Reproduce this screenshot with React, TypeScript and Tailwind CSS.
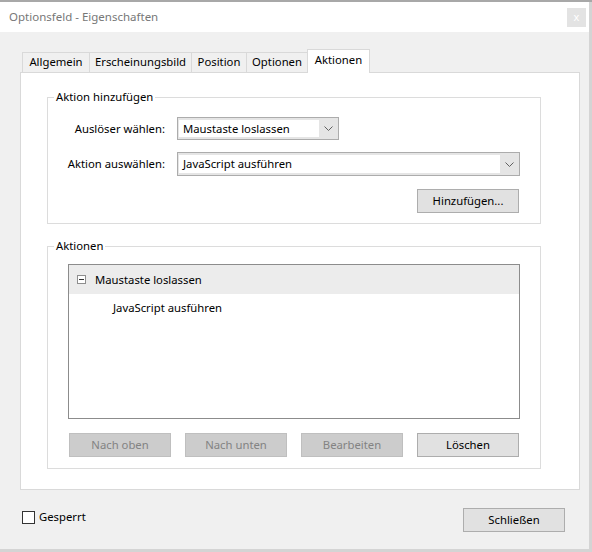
import React from "react";

function Chevron() {
  return (
    <svg width="9" height="5" viewBox="0 0 9 5" fill="none">
      <polyline points="0.5,0.5 4.5,4.5 8.5,0.5" stroke="#606060" strokeWidth="1" />
    </svg>
  );
}

function Select({ value, width, height }: { value: string; width: string; height: string }) {
  return (
    <div className={`${width} ${height} flex border border-[#acacac] bg-[#e5e5e5] py-[2px] pl-[1px]`}>
      <div className="flex-1 bg-white flex items-center pl-[4px] text-black">{value}</div>
      <div className="w-[19px] flex items-center justify-center">
        <Chevron />
      </div>
    </div>
  );
}

function Btn({ label, disabled }: { label: string; disabled?: boolean }) {
  return disabled ? (
    <div className="w-[102px] h-[24px] flex items-center justify-center border border-[#bfbfbf] bg-[#cccccc] text-[#838383]">
      {label}
    </div>
  ) : (
    <div className="w-[102px] h-[24px] flex items-center justify-center border border-[#adadad] bg-[#e1e1e1] text-black">
      {label}
    </div>
  );
}

export default function App() {
  return (
    <div className="w-[592px] h-[552px] bg-[#d4d4d4] font-['Noto_Sans',sans-serif] text-[11.3px] leading-[16px] text-black overflow-hidden">
      <div className="h-[2px] bg-[#a8a8a8]" />
      <div className="w-[589px] h-[547px] bg-[#f0f0f0] flex flex-col">
        {/* title bar */}
        <div className="h-[30px] bg-white flex items-center justify-between pl-[9px] pr-[3px]">
          <span className="text-[#777777] text-[11.5px]">Optionsfeld - Eigenschaften</span>
          <div className="w-[19px] h-[19px] bg-[#e3e3e3] flex items-center justify-center text-white text-[11px] leading-none pb-[1px]">
            x
          </div>
        </div>

        {/* tabs */}
        <div className="pl-[20px] pt-[17px]">
          <div className="flex items-end pl-[2px] h-[23px]">
            <div className="w-[67px] h-[20px] border-t border-l border-[#d9d9d9] flex items-center justify-center pb-[1px]">Allgemein</div>
            <div className="w-[102px] h-[20px] border-t border-l border-[#d9d9d9] flex items-center justify-center pb-[1px]">Erscheinungsbild</div>
            <div className="w-[55px] h-[20px] border-t border-l border-[#d9d9d9] flex items-center justify-center pb-[1px]">Position</div>
            <div className="w-[61px] h-[20px] border-t border-l border-[#d9d9d9] flex items-center justify-center pb-[1px]">Optionen</div>
            <div className="relative z-10 w-[63px] h-[24px] -mb-px bg-white border-t border-l border-r border-[#d9d9d9] flex justify-center pt-[2px]">Aktionen</div>
          </div>

          {/* panel */}
          <div className="w-[560px] h-[418px] bg-white border border-[#d9d9d9] pl-[26px] pt-[16px]">
            <fieldset className="w-[494px] border border-[#dcdcdc] pt-[12px] pb-[10px]">
              <legend className="ml-[6px] px-[2px]">Aktion hinzufügen</legend>
              <div className="flex items-center">
                <div className="w-[117px] text-right">Auslöser wählen:</div>
                <div className="ml-[12px]">
                  <Select value="Maustaste loslassen" width="w-[162px]" height="h-[23px]" />
                </div>
              </div>
              <div className="flex items-center mt-[12px]">
                <div className="w-[117px] text-right">Aktion auswählen:</div>
                <div className="ml-[12px]">
                  <Select value="JavaScript ausführen" width="w-[343px]" height="h-[24px]" />
                </div>
              </div>
              <div className="flex justify-end mt-[13px] pr-[21px]">
                <Btn label="Hinzufügen..." />
              </div>
            </fieldset>

            <fieldset className="w-[494px] mt-[14px] border border-[#dcdcdc] pt-[10px] pb-[11px]">
              <legend className="ml-[6px] px-[2px]">Aktionen</legend>
              <div className="ml-[20px] w-[452px] h-[155px] border border-[#8c8c8c] bg-white">
                <div className="h-[29px] bg-[#ececec] flex items-center pl-[8px]">
                  <svg width="9" height="9" viewBox="0 0 9 9" fill="none">
                    <rect x="0.5" y="0.5" width="8" height="8" stroke="#8e8e8e" strokeWidth="1" fill="white" />
                    <line x1="2" y1="4.5" x2="7" y2="4.5" stroke="#333333" strokeWidth="1" />
                  </svg>
                  <span className="ml-[9px]">Maustaste loslassen</span>
                </div>
                <div className="h-[28px] flex items-center pl-[44px]">JavaScript ausführen</div>
              </div>
              <div className="ml-[20px] w-[452px] px-[1px] mt-[14px] flex justify-between">
                <Btn label="Nach oben" disabled />
                <Btn label="Nach unten" disabled />
                <Btn label="Bearbeiten" disabled />
                <Btn label="Löschen" />
              </div>
            </fieldset>
          </div>
        </div>

        {/* bottom row */}
        <div className="mt-[18px] flex items-start justify-between pl-[22px] pr-[24px]">
          <div className="flex items-center mt-[1px] gap-[4px]">
            <div className="w-[13px] h-[13px] border border-[#333333] bg-white" />
            <span>Gesperrt</span>
          </div>
          <Btn label="Schließen" />
        </div>
      </div>
    </div>
  );
}
